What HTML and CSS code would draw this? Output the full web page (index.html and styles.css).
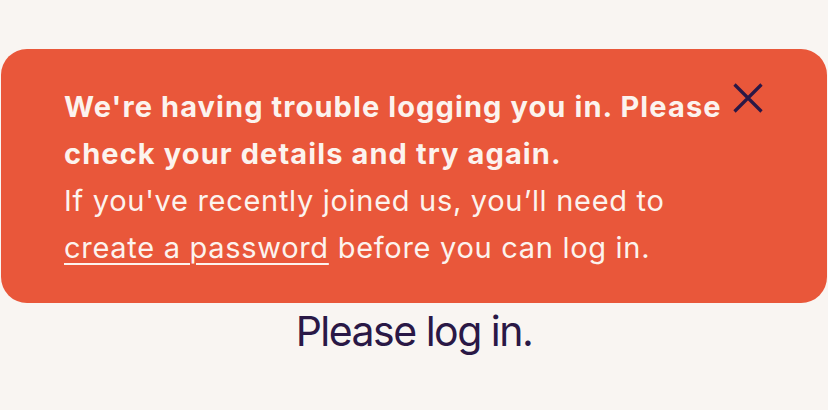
FILE: index.html
```html
<!DOCTYPE html>
<html>
  <head>
    <title>Log in</title>
    <link rel="stylesheet" href="styles.css">
  </head>
  <body>
    <div class="alert" role="alert">
      <div class="alert-text">
        <div class="alert-title">
          We're having trouble logging you in. Please check your details and try again.
        </div>
        <div class="alert-body">
          If you've recently joined us, you’ll need to
          <a href="#" class="alert-link">create a password</a> before you can log in.
        </div>
      </div>
      <button class="alert-close" aria-label="Close">
        <svg width="30" height="30" viewBox="0 0 30 30">
          <path d="M1.5 1.5 L28.5 28.5 M28.5 1.5 L1.5 28.5" stroke="#2a1846" stroke-width="3.2" fill="none" />
        </svg>
      </button>
    </div>
    <div class="heading">Please log in.</div>
  </body>
</html>
```
FILE: styles.css
```css
body {
  margin: 0;
  padding: 0;
  background: #f9f5f2;
  font-family: Inter, "Liberation Sans", Arial, sans-serif;
}

.alert {
  margin: 49px 1px 0;
  padding: 34px 64px 32px 63px;
  background: #e9573a;
  border-radius: 26px;
  display: flex;
  align-items: flex-start;
  gap: 10px;
  color: #fcf3ee;
}

.alert-text {
  flex: 1;
  font-size: 29px;
  line-height: 47px;
}

.alert-title {
  font-weight: 700;
  letter-spacing: 1.1px;
}

.alert-body {
  letter-spacing: 0.7px;
}

.alert-link {
  color: inherit;
  text-decoration: underline;
  text-underline-offset: 5px;
  text-decoration-thickness: 1.5px;
}

.alert-close {
  flex: none;
  width: 30px;
  height: 30px;
  padding: 0;
  border: none;
  background: none;
  cursor: pointer;
}

.alert-close svg {
  display: block;
}

.heading {
  margin-top: 4px;
  text-align: center;
  font-size: 41px;
  line-height: 49px;
  letter-spacing: -1.5px;
  color: #2a1846;
}
```
